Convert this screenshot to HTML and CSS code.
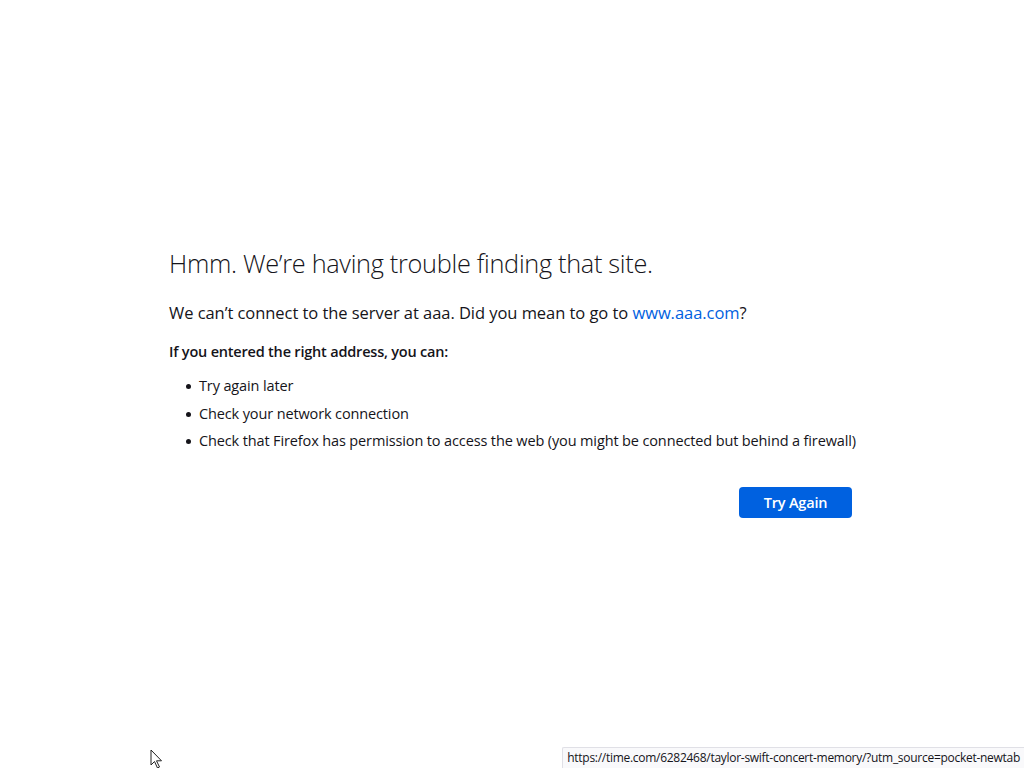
FILE: index.html
```html
<!DOCTYPE html>
<html lang="en">
<head>
<meta charset="utf-8">
<title>Server Not Found</title>
<link rel="stylesheet" href="styles.css">
</head>
<body>
<main class="container">
  <h1 class="title">Hmm. We’re having trouble finding that site.</h1>
  <p class="intro">We can’t connect to the server at aaa. Did you mean to go to <a class="link" href="#">www.aaa.com</a>?</p>
  <p class="subhead">If you entered the right address, you can:</p>
  <ul class="tips">
    <li>Try again later</li>
    <li>Check your network connection</li>
    <li>Check that Firefox has permission to access the web (you might be connected but behind a firewall)</li>
  </ul>
  <div class="actions">
    <button class="btn-primary">Try Again</button>
  </div>
</main>
<div class="status">https://time.com/6282468/taylor-swift-concert-memory/?utm_source=pocket-newtab</div>
<svg class="cursor" width="14" height="20" viewBox="0 0 14 20"><path d="M1 1 L1 16 L4.5 12.5 L7.5 19 L9.5 18 L6.5 11.8 L11.5 11.8 Z" fill="#fff" stroke="#222" stroke-width="1"/></svg>
</body>
</html>
```
FILE: styles.css
```css
html, body {
  margin: 0;
  padding: 0;
  background: #ffffff;
  height: 100%;
}
body {
  font-family: "Open Sans", "Noto Sans", sans-serif;
  color: #15141a;
  position: relative;
  overflow: hidden;
}
.container {
  width: 686px;
  margin: 0 auto;
  padding-top: 244px;
  display: flex;
  flex-direction: column;
}
.title {
  margin: 0;
  font-size: 25.3px;
  font-weight: 300;
  line-height: 38px;
  letter-spacing: -0.3px;
  color: #15141a;
}
.intro {
  margin: 19px 0 0;
  font-size: 16.5px;
  line-height: 24px;
  letter-spacing: -0.05px;
}
.link {
  color: #0061e0;
  text-decoration: none;
}
.subhead {
  margin: 16px 0 0;
  font-size: 14.5px;
  font-weight: 600;
  line-height: 22px;
  letter-spacing: -0.2px;
}
.tips {
  margin: 13px 0 0;
  padding-left: 30px;
  list-style: none;
  font-size: 14.5px;
  line-height: 20px;
  letter-spacing: -0.13px;
  white-space: nowrap;
  display: flex;
  flex-direction: column;
  gap: 7.5px;
}
.tips li {
  position: relative;
}
.tips li::before {
  content: "";
  position: absolute;
  left: -13px;
  top: 8px;
  width: 5px;
  height: 5px;
  border-radius: 50%;
  background: #15141a;
}
.actions {
  display: flex;
  justify-content: flex-end;
  margin-top: 36px;
  padding-right: 3px;
}
.btn-primary {
  width: 113px;
  height: 31px;
  border: none;
  border-radius: 4px;
  background: #0061e0;
  color: #ffffff;
  font-family: "Open Sans", "Noto Sans", sans-serif;
  font-size: 14.5px;
  font-weight: 600;
  letter-spacing: -0.2px;
  padding: 0;
}
.status {
  position: absolute;
  right: 0;
  bottom: 0;
  height: 20px;
  line-height: 20px;
  padding: 0 4px 0 4px;
  background: #f9f9fb;
  border-top: 1px solid #e0e0e6;
  border-left: 1px solid #e0e0e6;
  border-top-left-radius: 2px;
  font-size: 12px;
  color: #15141a;
  letter-spacing: -0.28px;
}
.cursor {
  position: absolute;
  left: 150px;
  top: 749px;
}
```
